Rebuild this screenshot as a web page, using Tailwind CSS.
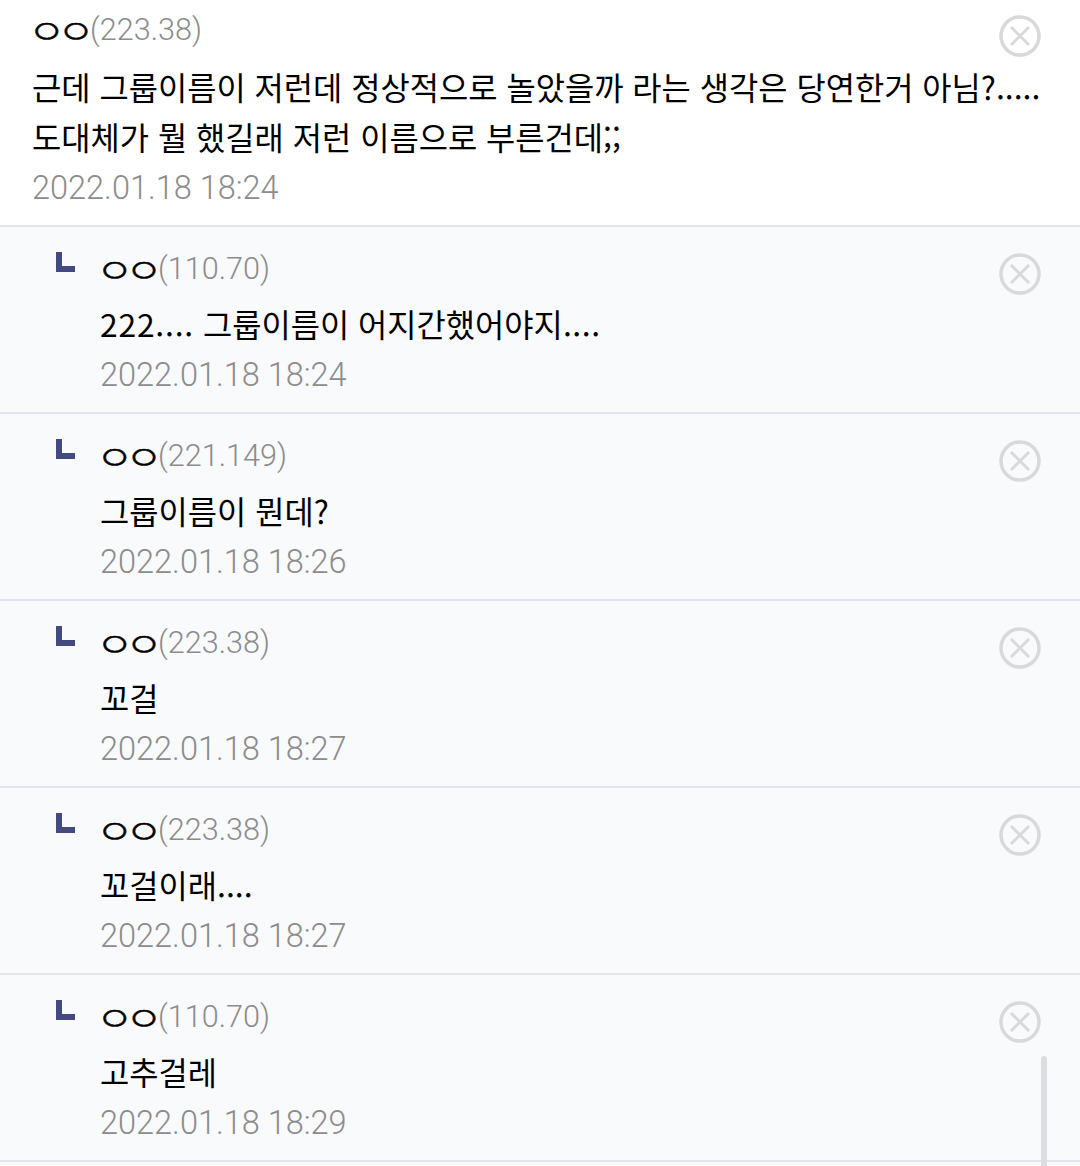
<!DOCTYPE html>
<html lang="ko">
<head>
  <meta charset="UTF-8" />
  <title>Comments</title>
  <script src="https://cdn.jsdelivr.net/npm/@tailwindcss/browser@4"></script>
</head>
<body class="bg-white text-black overflow-hidden font-['Roboto','Noto_Sans_CJK_KR',sans-serif]">
  <div class="relative h-[1166px] overflow-hidden">

    <div class="flex justify-between h-[227px] pl-[32px] pr-[39px] border-b-2 border-[#e2e4ee]">
      <div class="flex-1 min-w-0 whitespace-nowrap pt-[8px]">
        <p class="h-[44px] text-[30.6px] font-light leading-[44px] text-[#8c8c8c]"><span class="inline-block w-[62px] -ml-[4px] align-top origin-left scale-x-[1.2] text-[34px] tracking-[-7px] [-webkit-text-stroke:0.5px_black] text-black font-['Noto_Sans_CJK_KR',sans-serif]">ㅇㅇ</span>(223.38)</p>
        <p class="mt-[9px] text-[31.8px] leading-[50px] font-['Noto_Sans_CJK_KR',sans-serif]">근데 그룹이름이 저런데 정상적으로 놀았을까 라는 생각은 당연한거 아님?.....<br>도대체가 뭘 했길래 저런 이름으로 부른건데;;</p>
        <p class="mt-[5px] text-[32.5px] font-light leading-[44px] text-[#8c8c8c]">2022.01.18 18:24</p>
      </div>
      <svg class="mt-[15px] shrink-0" width="42" height="42" viewBox="0 0 42 42" fill="none" stroke="#d9d9d9" stroke-width="3.5"><circle cx="21" cy="21" r="19"/><path d="M12 12l18 18M30 12L12 30" stroke-width="3"/></svg>
    </div>

    <div id="replies"></div>

    <div class="h-[10px] bg-[#f9fafc]"></div>
    <div class="absolute right-[33px] top-[1056px] bottom-0 w-[6px] rounded-t-full bg-[#dcdde1]"></div>
  </div>

<script>
  const replies = [
    { ip: "110.70", text: "<span class='tracking-[0.8px]'>222....</span> 그룹이름이 어지간했어야지<span class='tracking-[0.6px]'>....</span>", time: "18:24" },
    { ip: "221.149", text: "그룹이름이 뭔데?", time: "18:26" },
    { ip: "223.38", text: "꼬걸", time: "18:27" },
    { ip: "223.38", text: "꼬걸이래....", time: "18:27" },
    { ip: "110.70", text: "고추걸레", time: "18:29" },
  ];

  document.getElementById("replies").innerHTML = replies.map((r) => `
    <div class="flex justify-between h-[187px] pl-[56px] pr-[39px] bg-[#f9fafc] border-b-2 border-[#e2e4ee]">
      <div class="flex">
        <svg class="mt-[25px] w-[19px] h-[20px] shrink-0" viewBox="0 0 19 20" fill="#434a80"><path d="M0 0h6v14h13v6H0z"/></svg>
        <div class="ml-[25px] pt-[20px]">
          <p class="h-[44px] text-[30.6px] font-light leading-[44px] text-[#8c8c8c]"><span class="inline-block w-[62px] -ml-[4px] align-top origin-left scale-x-[1.2] text-[34px] tracking-[-7px] [-webkit-text-stroke:0.5px_black] text-black font-['Noto_Sans_CJK_KR',sans-serif]">ㅇㅇ</span>(${r.ip})</p>
          <p class="mt-[7px] text-[31.8px] leading-[50px] font-['Noto_Sans_CJK_KR',sans-serif]">${r.text}</p>
          <p class="mt-[5px] text-[32.5px] font-light leading-[44px] text-[#8c8c8c]">2022.01.18 ${r.time}</p>
        </div>
      </div>
      <svg class="mt-[26px] shrink-0" width="42" height="42" viewBox="0 0 42 42" fill="none" stroke="#d9d9d9" stroke-width="3.5"><circle cx="21" cy="21" r="19"/><path d="M12 12l18 18M30 12L12 30" stroke-width="3"/></svg>
    </div>
  `).join("");
</script>
</body>
</html>
